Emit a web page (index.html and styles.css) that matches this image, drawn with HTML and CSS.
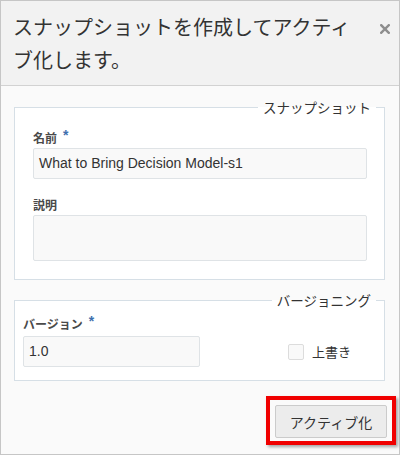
FILE: index.html
```html
<!DOCTYPE html>
<html lang="ja">
<head>
<meta charset="utf-8">
<title>スナップショット</title>
<link rel="stylesheet" href="styles.css">
</head>
<body>
<div class="dialog">
  <div class="header">
    <div class="title">スナップショットを作成してアクティブ化します。</div>
    <div class="close" aria-label="閉じる">
      <svg width="10" height="10" viewBox="0 0 10 10"><path d="M1.2 1.2 L8.8 8.8 M8.8 1.2 L1.2 8.8" stroke="#8e8e8e" stroke-width="2.4" stroke-linecap="square"/></svg>
    </div>
  </div>
  <div class="body">
    <fieldset class="group group-snap">
      <legend class="legend">スナップショット</legend>
      <div class="label">名前<span class="req">*</span></div>
      <div class="input">What to Bring Decision Model-s1</div>
      <div class="label label-gap">説明</div>
      <div class="textarea"></div>
    </fieldset>
    <fieldset class="group group-ver">
      <legend class="legend">バージョニング</legend>
      <div class="ver-row">
        <div class="ver-col">
          <div class="label label-ver">バージョン<span class="req">*</span></div>
          <div class="input">1.0</div>
        </div>
        <div class="check">
          <span class="box"></span>
          <span class="check-label">上書き</span>
        </div>
      </div>
    </fieldset>
    <div class="actions">
      <div class="highlight">
        <button class="btn" type="button">アクティブ化</button>
      </div>
    </div>
  </div>
</div>
</body>
</html>
```
FILE: styles.css
```css
* { box-sizing: border-box; }
html, body { margin: 0; padding: 0; }
body {
  font-family: "Noto Sans CJK JP", "Liberation Sans", sans-serif;
  color: #333;
  background: #fff;
}
.dialog {
  width: 400px;
  height: 455px;
  border: 1px solid #c6c6c6;
  display: flex;
  flex-direction: column;
  background: #fafafa;
}
.header {
  display: flex;
  align-items: flex-start;
  background: #f2f2f2;
  border-bottom: 1px solid #d2d2d2;
  padding: 9px 6px 9px 12px;
}
.title {
  flex: 1;
  font-size: 20px;
  line-height: 33px;
  color: #333;
}
.close {
  width: 16px;
  height: 33px;
  margin-left: 16px;
  display: flex;
  align-items: center;
  justify-content: center;
  padding-top: 4px;
}
.close svg { display: block; }
.body {
  flex: 1;
  padding: 11px 14px 0 13px;
  display: flex;
  flex-direction: column;
}
.group {
  margin: 0;
  border: 1px solid #d6dfe6;
  background: #fff;
  min-width: 0;
}
.group-snap { padding: 12px 17px 18px 18px; }
.group-ver { margin-top: 10px; padding: 5px 17px 13px 8px; }
.legend {
  margin-left: auto;
  margin-right: -9px;
  padding: 0 5px;
  font-size: 13.5px;
  line-height: 20px;
  color: #333;
}
.label {
  font-size: 12px;
  line-height: 17px;
  font-weight: bold;
  color: #4a4a4a;
  margin-bottom: 2px;
}
.label-gap { margin-top: 17px; }
.label-ver { margin-bottom: 4px; }
.req {
  color: #3f6fae;
  font-size: 14px;
  line-height: 12px;
  vertical-align: top;
  margin-left: 6px;
  font-family: "Liberation Sans", sans-serif;
}
.input {
  height: 31px;
  border: 1px solid #dfe3e6;
  border-radius: 2px;
  background: #f9f9f9;
  padding: 0 5px;
  font-family: "Liberation Sans", sans-serif;
  font-size: 14px;
  line-height: 29px;
  color: #333;
}
.textarea {
  height: 46px;
  border: 1px solid #dfe3e6;
  border-radius: 2px;
  background: #f9f9f9;
}
.ver-row {
  display: flex;
  align-items: flex-end;
}
.ver-col { width: 177px; }
.check {
  display: flex;
  align-items: center;
  margin-left: 88px;
  margin-bottom: 6px;
}
.box {
  width: 16px;
  height: 16px;
  border: 1px solid #dcdcdc;
  border-radius: 2px;
  background: #f9f9f9;
}
.check-label {
  margin-left: 8px;
  font-size: 13px;
  line-height: 18px;
  color: #333;
}
.actions {
  display: flex;
  justify-content: flex-end;
  margin-right: -11px;
  padding-top: 15px;
}
.highlight {
  border: 4px solid #f00000;
  padding: 5px 5px 3px 5px;
  box-shadow: 2px 2px 3px rgba(0, 0, 0, 0.35);
  background: #fafafa;
}
.btn {
  display: block;
  width: 112px;
  height: 33px;
  margin: 0;
  padding: 0;
  border: 1px solid #cbcbcb;
  border-radius: 2px;
  background: #ececec;
  font-family: "Noto Sans CJK JP", "Liberation Sans", sans-serif;
  font-size: 14px;
  color: #333;
}
```
